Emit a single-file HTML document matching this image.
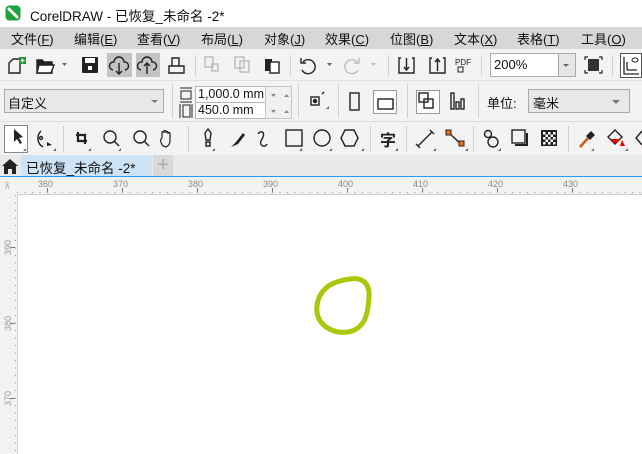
<!DOCTYPE html>
<html><head><meta charset="utf-8"><style>
*{margin:0;padding:0;box-sizing:border-box}
body{width:642px;height:454px;overflow:hidden;background:#fff;font-family:"Liberation Sans","Noto Sans CJK SC",sans-serif;position:relative;color:#111}
.a{position:absolute}
.t{font-size:13px;white-space:nowrap}
</style></head><body>
<!-- title -->
<div class="a" style="left:0;top:0;width:642px;height:27px;background:#fff"></div>
<svg class="a" style="left:5px;top:5px" width="16" height="16"><rect x="0.5" y="0.5" width="15" height="15" rx="4" fill="#1ea33a"/><path d="M4 4 L12 12" stroke="#fff" stroke-width="3" stroke-linecap="round"/></svg>
<div class="a t" style="left:30px;top:5px;font-size:13.5px">CorelDRAW - 已恢复_未命名 -2*</div>
<!-- menu -->
<div class="a" style="left:0;top:27px;width:642px;height:22px;background:#d7d7d7"></div>
<div class="a t" style="top:29px;left:11px">文件(<u>F</u>)</div>
<div class="a t" style="top:29px;left:74px">编辑(<u>E</u>)</div>
<div class="a t" style="top:29px;left:137px">查看(<u>V</u>)</div>
<div class="a t" style="top:29px;left:201px">布局(<u>L</u>)</div>
<div class="a t" style="top:29px;left:264px">对象(<u>J</u>)</div>
<div class="a t" style="top:29px;left:325px">效果(<u>C</u>)</div>
<div class="a t" style="top:29px;left:390px">位图(<u>B</u>)</div>
<div class="a t" style="top:29px;left:454px">文本(<u>X</u>)</div>
<div class="a t" style="top:29px;left:517px">表格(<u>T</u>)</div>
<div class="a t" style="top:29px;left:581px">工具(<u>O</u>)</div>
<!-- toolbars bg -->
<div class="a" style="left:0;top:49px;width:642px;height:106px;background:#f3f3f3"></div>
<div class="a" style="left:0;top:80px;width:642px;height:1px;background:#e2e2e2"></div>
<div class="a" style="left:0;top:121px;width:642px;height:1px;background:#dcdcdc"></div>
<div class="a" style="left:107px;top:53px;width:25px;height:24px;background:#c3c3c3"></div>
<div class="a" style="left:136px;top:53px;width:24px;height:24px;background:#c3c3c3"></div>
<!-- zoom combo -->
<div class="a" style="left:490px;top:53px;width:86px;height:24px;background:#fff;border:1px solid #aaa"></div>
<div class="a" style="left:558px;top:54px;width:17px;height:22px;background:#e6e6e6;border-left:1px solid #aaa"></div>
<div class="a t" style="left:494px;top:57px">200%</div>
<div class="a" style="left:620px;top:53px;width:22px;height:25px;background:#fff;border:1px solid #555"></div>
<!-- row2 -->
<div class="a" style="left:4px;top:89px;width:160px;height:24px;background:#e8e8e8;border:1px solid #a8a8a8"></div>
<div class="a t" style="left:8px;top:93px">自定义</div>
<div class="a" style="left:195px;top:86px;width:71px;height:17px;background:#fff;border:1px solid #b5b5b5"></div>
<div class="a" style="left:195px;top:102px;width:71px;height:17px;background:#fff;border:1px solid #b5b5b5"></div>
<div class="a" style="left:265px;top:86px;width:27px;height:33px;background:#f0f0f0;border:1px solid #c5c5c5"></div>
<div class="a t" style="left:198px;top:87px;font-size:12.5px">1,000.0 mm</div>
<div class="a t" style="left:198px;top:103px;font-size:12.5px">450.0 mm</div>
<div class="a" style="left:373px;top:90px;width:24px;height:24px;background:#fff;border:1px solid #999"></div>
<div class="a" style="left:416px;top:90px;width:24px;height:24px;background:#fff;border:1px solid #999"></div>
<div class="a t" style="left:487px;top:93px">单位:</div>
<div class="a" style="left:528px;top:89px;width:102px;height:24px;background:#e8e8e8;border:1px solid #a8a8a8"></div>
<div class="a t" style="left:533px;top:93px">毫米</div>
<div class="a" style="left:4px;top:125px;width:24px;height:28px;background:#fff;border:1px solid #888"></div>
<!-- icons svg -->
<svg class="a" style="left:0;top:0" width="642" height="160" fill="none" stroke="#222" stroke-width="1.4">
<!-- separators -->
<g stroke="#d0d0d0" stroke-width="1">
<path d="M195.5 55V76M290.5 55V76M388.5 55V76M481.5 55V76M612.5 55V76"/>
<path d="M172.5 84V118M298.5 84V118M338.5 84V118M407.5 84V118M478.5 84V118"/>
<path d="M63.5 126V152M188.5 126V152M370.5 126V152M406.5 126V152M473.5 126V152M568.5 126V152"/>
</g>
<!-- new -->
<path d="M9 63L13 59H20V73H9Z"/><rect x="19" y="57" width="7" height="7" fill="#1a9a2a" stroke="none"/><path d="M22.5 58.5v4M20.5 60.5h4" stroke="#fff" stroke-width="1.2"/>
<!-- open -->
<path d="M37 60h5l2 2h8v11H37Z" fill="#222"/><path d="M39 65h15l-3 8H37Z" fill="#fff"/><path d="M62 63h5l-2.5 3z" fill="#666" stroke="none"/>
<!-- save -->
<rect x="82" y="57" width="16" height="16" rx="1" fill="#222" stroke="none"/><rect x="85" y="58" width="10" height="5" fill="#fff" stroke="none"/><rect x="88" y="66" width="4" height="4" fill="#fff" stroke="none"/>
<!-- cloud down/up -->
<path d="M113 70a4 4 0 0 1 1-8a5 5 0 0 1 10 0a4 4 0 0 1 1 8"/><path d="M119 63v11M116 71l3 3 3-3"/>
<path d="M141 70a4 4 0 0 1 1-8a5 5 0 0 1 10 0a4 4 0 0 1 1 8"/><path d="M147 74v-11M144 66l3-3 3 3"/>
<!-- print -->
<path d="M172 66v-8h7v8M169 66h15v7h-15z"/>
<!-- disabled -->
<g stroke="#bbb"><rect x="205" y="57" width="8" height="10"/><rect x="212" y="64" width="6" height="7"/><rect x="235" y="57" width="9" height="11"/><rect x="240" y="61" width="9" height="11"/></g>
<rect x="265" y="59" width="7" height="12" fill="#222" stroke="none"/><rect x="270" y="62" width="9" height="11" fill="#fff"/>
<!-- undo/redo -->
<path d="M303 62a7 7 0 1 1 -1 8"/><path d="M301 58v5h5" /><path d="M327 63h5l-2.5 3z" fill="#666" stroke="none"/>
<g stroke="#bbb"><path d="M357 62a7 7 0 1 0 1 8"/><path d="M359 58v5h-5"/></g><path d="M371 63h5l-2.5 3z" fill="#bbb" stroke="none"/>
<!-- import/export -->
<path d="M401 58h-2v15h15v-15h-2M406.5 58v12M404 67l2.5 3 2.5-3"/>
<path d="M432 58h-2v15h15v-15h-2M437.5 71v-12M435 62l2.5-3 2.5 3"/>
<text x="455" y="65" font-size="8" fill="#222" stroke="none" font-family="Liberation Sans">PDF</text><rect x="458" y="67" width="5" height="5" stroke-width="1"/>
<path d="M563 64h6l-3 3z" fill="#666" stroke="none"/>
<!-- fullscreen -->
<rect x="588" y="59" width="11" height="12" fill="#333" stroke="none"/><path d="M585 60v-3h3M599 57h3v3M602 70v3h-3M588 73h-3v-3" stroke-width="1.2"/>
<!-- options -->
<path d="M624 57v17h15M627 70h10M627 62v8" stroke-width="1.3"/><ellipse cx="635" cy="60" rx="3" ry="2" stroke-width="1"/>
<!-- combo arrows -->
<path d="M151 100h7l-3.5 3z" fill="#777" stroke="none"/><path d="M612 100h8l-4 4z" fill="#777" stroke="none"/>
<path d="M271 94h5l-2.5 3zM284 97h5l-2.5-3zM271 110h5l-2.5 3zM284 113h5l-2.5-3z" fill="#888" stroke="none"/>
<!-- page size icons -->
<path d="M180 88h12M180 102h12M181 91h10v8h-10zM180 104v14M192 104v14M183 105h7v12h-7z" stroke-width="1"/>
<!-- 308 icon -->
<rect x="311" y="97" width="8" height="8"/><circle cx="315" cy="101" r="1.5" fill="#222"/><path d="M322 94l2-2" />
<rect x="350" y="93" width="9" height="17"/><rect x="378" y="99" width="15" height="10"/>
<rect x="419" y="93" width="9" height="9"/><rect x="424" y="99" width="9" height="9"/>
<rect x="451" y="93" width="3" height="16"/><rect x="456" y="102" width="3" height="7"/><rect x="461" y="99" width="3" height="10"/>
<!-- row3 tools -->
<path d="M14 129l0 13 3-3 3 5 2-1-3-5 4-1z" fill="#222" stroke="none"/>
<path d="M41 131a10 10 0 0 0 2 16"/><circle cx="41" cy="138" r="1.5"/><path d="M47 142l5 3-5 1z" fill="#222" stroke="none"/>
<path d="M78 132v9h9M76 135h9v9" stroke-width="2.2"/>
<circle cx="110" cy="137" r="6"/><path d="M114 141l5 5"/>
<circle cx="140" cy="137" r="6"/><path d="M144 141l5 5"/>
<path d="M163 146c-3-4-3-7-1-8v-5c0-2 2-2 2 0v-1c0-2 2-2 2 0v1c0-2 2-2 2 0v1c0-2 2-2 2 0v7c0 3-2 5-4 6z" stroke-width="1.2"/>
<path d="M205 133l3-4 3 4-1 7h-4z M206 142h4v4h-4z"/>
<path d="M231 147l5-5 7-9 2 2-7 9z" fill="#222" stroke="none"/>
<path d="M258 134c3-4 7-2 5 3l-2 4c-2 5 4 7 6 3"/>
<rect x="286" y="130" width="16" height="16"/>
<circle cx="322" cy="138" r="8"/>
<path d="M345 130h9l4 8-4 8h-9l-4-8z"/>
<text x="380" y="146" font-size="16" font-weight="bold" fill="#222" stroke="none" font-family="Noto Sans CJK SC">字</text>
<path d="M418 146l14-14M416 144l4 4M430 130l4 4"/>
<path d="M449 133l12 11" /><rect x="446" y="130" width="5" height="5" fill="#f07010" stroke="#222" stroke-width="1"/><rect x="459" y="141" width="5" height="5" fill="#f07010" stroke="#222" stroke-width="1"/>
<circle cx="488" cy="134" r="3.5"/><circle cx="493" cy="142" r="5"/>
<rect x="512" y="130" width="13" height="13"/><path d="M527 133v12h-12" stroke-width="2"/>
<rect x="541" y="130" width="16" height="16" fill="#222" stroke="none"/>
<g fill="#fff" stroke="none"><rect x="543" y="132" width="2.5" height="2.5"/><rect x="548" y="132" width="2.5" height="2.5"/><rect x="553" y="132" width="2.5" height="2.5"/><rect x="545.5" y="134.5" width="2.5" height="2.5"/><rect x="550.5" y="134.5" width="2.5" height="2.5"/><rect x="543" y="137" width="2.5" height="2.5"/><rect x="548" y="137" width="2.5" height="2.5"/><rect x="553" y="137" width="2.5" height="2.5"/><rect x="545.5" y="139.5" width="2.5" height="2.5"/><rect x="550.5" y="139.5" width="2.5" height="2.5"/><rect x="543" y="142" width="2.5" height="2.5"/><rect x="548" y="142" width="2.5" height="2.5"/><rect x="553" y="142" width="2.5" height="2.5"/></g>
<path d="M580 147l8-9" stroke="#d05a10" stroke-width="2.5"/><path d="M587 136l4-4 3 3-4 4z" fill="#222"/>
<path d="M608 137l7-7 7 7-7 7z"/><path d="M610 139l5 5 5-5z" fill="#e00" stroke="none"/><path d="M622 140l3 6h-5z" fill="#e00" stroke="none"/>
<path d="M642 131l-6 7 6 7"/>
<!-- small corner triangles -->
<g fill="#666" stroke="none">
<path d="M26 151h-3l3-3zM56 151h-3l3-3zM91 151h-3l3-3zM121 151h-3l3-3zM215 151h-3l3-3zM302 151h-3l3-3zM332 151h-3l3-3zM364 151h-3l3-3zM398 151h-3l3-3zM436 151h-3l3-3zM468 151h-3l3-3zM501 151h-3l3-3zM594 151h-3l3-3zM628 151h-3l3-3zM329 109h-3l3-3z"/>
</g>
</svg>
<!-- tab bar -->
<div class="a" style="left:0;top:155px;width:642px;height:21px;background:#e9e9e9"></div>
<svg class="a" style="left:1px;top:158px" width="18" height="16"><path d="M1 8L9 1l8 7h-2v8h-4v-5H7v5H3V8z" fill="#222"/></svg>
<div class="a" style="left:21px;top:155px;width:131px;height:21px;background:#cde4f7"></div>
<div class="a t" style="left:26px;top:157px;font-size:13.5px">已恢复_未命名 -2*</div>
<div class="a" style="left:153px;top:155px;width:20px;height:21px;background:#d9d9d9;color:#aaa;font-size:20px;line-height:20px;text-align:center">+</div>
<div class="a" style="left:0;top:176px;width:642px;height:1px;background:#1aa0ee"></div>
<!-- rulers -->
<div class="a" style="left:0;top:177px;width:642px;height:17px;background:#f3f3f3"></div>
<div class="a" style="left:0;top:177px;width:17px;height:277px;background:#f3f3f3"></div>
<div class="a" style="left:17px;top:194px;width:625px;height:1px;background:#d0d0d0"></div>
<div class="a" style="left:17px;top:194px;width:1px;height:260px;background:#d0d0d0"></div>
<svg class="a" style="left:0;top:177px" width="642" height="277" font-family="Liberation Sans" font-size="9" fill="#888">
<text x="38" y="10">360</text><text x="113" y="10">370</text><text x="188" y="10">380</text><text x="263" y="10">390</text><text x="338" y="10">400</text><text x="413" y="10">410</text><text x="488" y="10">420</text><text x="563" y="10">430</text>
<g stroke="#777" stroke-width="1">
<path d="M47.5 11v5M122.5 11v5M197.5 11v5M272.5 11v5M347.5 11v5M422.5 11v5M497.5 11v5M572.5 11v5"/>
<path d="M10 70.5h5M10 146.5h5M10 221.5h5"/>
</g>
<g fill="#999">
<text transform="translate(11,78) rotate(-90)">390</text>
<text transform="translate(11,154) rotate(-90)">380</text>
<text transform="translate(11,229) rotate(-90)">370</text>
</g>
<text x="4" y="12" fill="#aaa" font-size="9">⊼</text>
</svg>
<svg class="a" style="left:17px;top:190px" width="625" height="4"><path d="M0 2.5H625" stroke="#999" stroke-width="1" stroke-dasharray="1 6.5"/></svg>
<svg class="a" style="left:13px;top:195px" width="4" height="259"><path d="M2.5 0V259" stroke="#999" stroke-width="1" stroke-dasharray="1 6.5"/></svg>
<!-- shape -->
<svg class="a" style="left:0;top:0" width="642" height="454"><path d="M350 279C362 277 370 283 369 297C368 312 366 326 352 331C340 335 325 330 319 319C314 308 318 295 326 288C333 282 342 280 350 279Z" fill="none" stroke="#a8c80a" stroke-width="5"/></svg>
</body></html>
